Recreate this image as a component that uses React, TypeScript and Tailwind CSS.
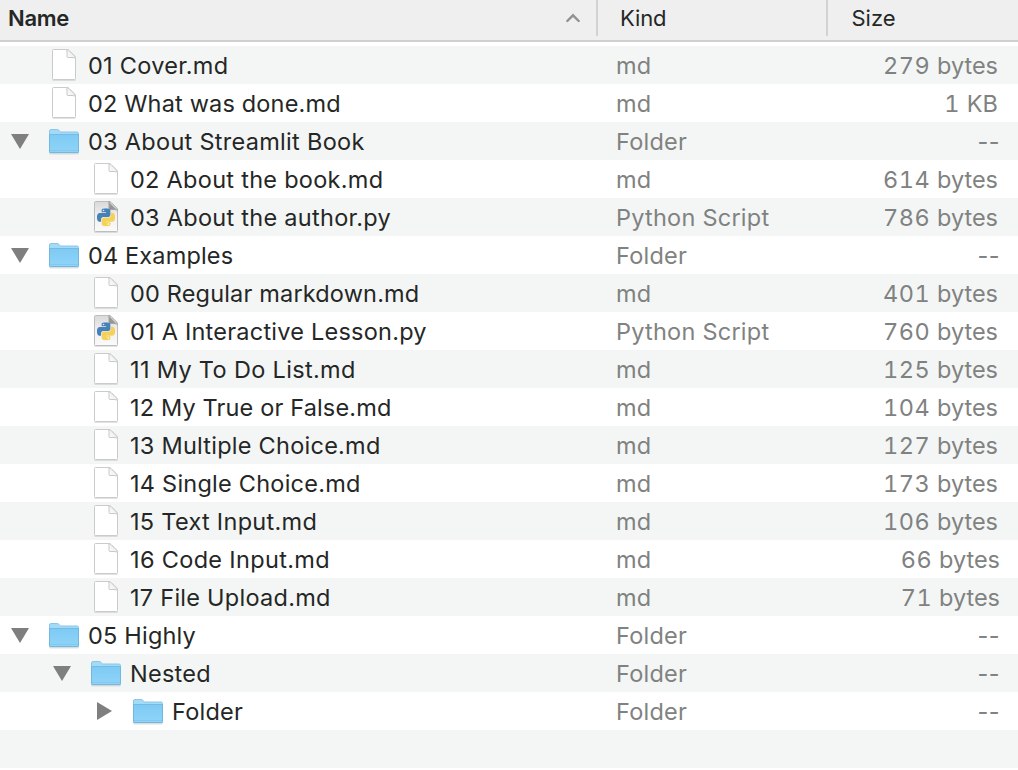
import React from "react";

type IconKind = "file" | "python" | "folder";

interface Row {
  name: string;
  icon: IconKind;
  kind: string;
  size: string;
  indent: string;
  open?: boolean;
  track: string;
}

const L0 = "pl-0";
const L1 = "pl-[42px]";
const L2 = "pl-[84px]";

const rows: Row[] = [
  { name: "01 Cover.md", icon: "file", kind: "md", size: "279 bytes", indent: L0, track: "tracking-[0.27px]" },
  { name: "02 What was done.md", icon: "file", kind: "md", size: "1 KB", indent: L0, track: "tracking-[0.17px]" },
  { name: "03 About Streamlit Book", icon: "folder", kind: "Folder", size: "--", indent: L0, open: true, track: "tracking-[0.29px]" },
  { name: "02 About the book.md", icon: "file", kind: "md", size: "614 bytes", indent: L1, track: "tracking-[0.28px]" },
  { name: "03 About the author.py", icon: "python", kind: "Python Script", size: "786 bytes", indent: L1, track: "tracking-[0.28px]" },
  { name: "04 Examples", icon: "folder", kind: "Folder", size: "--", indent: L0, open: true, track: "tracking-[0.15px]" },
  { name: "00 Regular markdown.md", icon: "file", kind: "md", size: "401 bytes", indent: L1, track: "tracking-[0.17px]" },
  { name: "01 A Interactive Lesson.py", icon: "python", kind: "Python Script", size: "760 bytes", indent: L1, track: "tracking-[0.23px]" },
  { name: "11 My To Do List.md", icon: "file", kind: "md", size: "125 bytes", indent: L1, track: "tracking-[0.33px]" },
  { name: "12 My True or False.md", icon: "file", kind: "md", size: "104 bytes", indent: L1, track: "tracking-[0.15px]" },
  { name: "13 Multiple Choice.md", icon: "file", kind: "md", size: "127 bytes", indent: L1, track: "tracking-[0.25px]" },
  { name: "14 Single Choice.md", icon: "file", kind: "md", size: "173 bytes", indent: L1, track: "tracking-[0.24px]" },
  { name: "15 Text Input.md", icon: "file", kind: "md", size: "106 bytes", indent: L1, track: "tracking-[0.29px]" },
  { name: "16 Code Input.md", icon: "file", kind: "md", size: "66 bytes", indent: L1, track: "tracking-[0.33px]" },
  { name: "17 File Upload.md", icon: "file", kind: "md", size: "71 bytes", indent: L1, track: "tracking-[0.26px]" },
  { name: "05 Highly", icon: "folder", kind: "Folder", size: "--", indent: L0, open: true, track: "tracking-[0.2px]" },
  { name: "Nested", icon: "folder", kind: "Folder", size: "--", indent: L1, open: true, track: "tracking-[0.25px]" },
  { name: "Folder", icon: "folder", kind: "Folder", size: "--", indent: L2, open: false, track: "tracking-[0.25px]" },
];

function Defs() {
  return (
    <svg width="0" height="0" className="absolute" aria-hidden="true">
      <defs>
        <linearGradient id="folderFront" x1="0" y1="0" x2="0" y2="1">
          <stop offset="0" stopColor="#7ecaf4" />
          <stop offset="1" stopColor="#90d4f9" />
        </linearGradient>
        <linearGradient id="pyPage" x1="0" y1="0" x2="0" y2="1">
          <stop offset="0" stopColor="#d9d9d9" />
          <stop offset="0.5" stopColor="#f1f1f1" />
          <stop offset="1" stopColor="#fafafa" />
        </linearGradient>
        <linearGradient id="foldShade" x1="0" y1="1" x2="1" y2="0">
          <stop offset="0" stopColor="#ffffff" />
          <stop offset="1" stopColor="#e4e4e4" />
        </linearGradient>
        <linearGradient id="pyFold" x1="0" y1="1" x2="1" y2="0">
          <stop offset="0" stopColor="#8a8a8a" />
          <stop offset="0.45" stopColor="#9a9a9a" />
          <stop offset="0.55" stopColor="#f2f2f2" />
          <stop offset="1" stopColor="#f8f8f8" />
        </linearGradient>
      </defs>
    </svg>
  );
}

function FolderIcon() {
  return (
    <svg width="40" height="38" viewBox="0 0 40 38" className="shrink-0">
      <path d="M5.5 31.8h29" stroke="#b5babd" strokeWidth="1" opacity=".7" />
      <path d="M5.5 30.5V9q0-1.5 1.5-1.5h6.3q1 0 1.6.8l.9 1q.5.7 1.4.7H33q1.500 0 1.500 1.500v19z" fill="#a3daf8" stroke="#8cc6e6" strokeWidth="1" />
      <path d="M5 12.500h30V30q0 1-1 1H6q-1 0-1-1z" fill="url(#folderFront)" />
      <path d="M5.500 12.500h29" stroke="#72bbe4" strokeWidth="1" />
      <path d="M5.500 12v17.500q0 1 1 1h27q1 0 1-1V12" fill="none" stroke="#72b8de" strokeWidth="1" />
      <path d="M6 28.500h28" stroke="#83c8ef" strokeWidth="1" />
    </svg>
  );
}

function PageIcon({ python }: { python?: boolean }) {
  return (
    <svg width="40" height="38" viewBox="0 0 40 38" className="shrink-0">
      <path d="M8.500 34h23" stroke="#a0a0a0" strokeWidth="1" opacity=".6" />
      <path
        d="M8.500 4.500q0-1 1-1H22.500q1.500 0 2.500 1l5.500 5.500q1 1 1 2.500v20q0 1-1 1h-21q-1 0-1-1z"
        fill={python ? "url(#pyPage)" : "#ffffff"}
        stroke={python ? "#bdbdbd" : "#cbcbcb"}
        strokeWidth="1"
      />
      <path
        d="M22.500 3.500q.5 1 .5 3v4q0 1 1 1h4q2.500 0 3.500 1q0-1.500-1-2.500L25 4.500q-1-1-2.500-1z"
        fill={python ? "url(#pyFold)" : "url(#foldShade)"}
        stroke={python ? "#a5a5a5" : "#c8c8c8"}
        strokeWidth="1"
      />
      {python && (
        <svg x="11" y="10.300" width="18" height="18" viewBox="0 0 24 24">
          <path
            fill="#4681b9"
            d="M14.25.18l.9.2.73.26.59.3.45.32.34.34.25.34.16.33.1.3.04.26.02.2-.01.13V8.500l-.05.63-.13.55-.21.46-.26.38-.3.31-.33.25-.35.19-.35.14-.33.1-.3.07-.26.04-.21.02H8.770l-.69.05-.59.14-.5.22-.41.27-.33.32-.27.35-.2.36-.15.37-.1.35-.07.32-.04.27-.02.21v3.060H3.170l-.21-.03-.28-.07-.32-.12-.35-.18-.36-.26-.36-.36-.35-.46-.32-.59-.28-.73-.21-.88-.14-1.050-.05-1.230.06-1.220.16-1.040.24-.87.32-.71.36-.57.4-.44.42-.33.42-.24.4-.16.36-.1.32-.05.24-.01h.16l.06.01h8.160v-.83H6.180l-.01-2.750-.02-.37.05-.34.11-.31.17-.28.25-.26.31-.23.38-.2.44-.18.51-.15.58-.12.64-.1.71-.06.77-.04.84-.02 1.270.05z"
          />
          <path
            fill="#f5d15a"
            d="M21.100 6.110l.28.06.32.12.35.18.36.27.36.35.35.47.32.59.28.73.21.88.14 1.040.05 1.230-.06 1.230-.16 1.040-.24.86-.32.71-.36.57-.4.45-.42.33-.42.24-.4.16-.36.09-.32.05-.24.02-.16-.01h-8.220v.82h5.840l.01 2.760.02.36-.05.34-.11.31-.17.29-.25.25-.31.24-.38.2-.44.17-.51.15-.58.13-.64.09-.71.07-.77.04-.84.01-1.270-.04-1.070-.14-.9-.2-.73-.25-.59-.3-.45-.33-.34-.34-.25-.34-.16-.33-.1-.3-.04-.25-.02-.2.01-.13v-5.340l.05-.64.13-.54.21-.46.26-.38.3-.32.33-.24.35-.2.35-.14.33-.1.3-.06.26-.04.21-.02.13-.01h5.840l.69-.05.59-.14.5-.21.41-.28.33-.32.27-.35.2-.36.15-.36.1-.35.07-.32.04-.28.02-.21V6.070h2.090l.14.01z"
          />
          <circle cx="8.700" cy="2.900" r="1.100" fill="#dfe9f2" />
          <circle cx="15.200" cy="21.100" r="1.100" fill="#fdf6dc" />
        </svg>
      )}
    </svg>
  );
}

function Disclosure({ open }: { open?: boolean }) {
  return (
    <svg width="44" height="38" viewBox="0 0 44 38" className="shrink-0">
      {open === true && <path d="M11 12h18l-9 15z" fill="#7f7f7f" />}
      {open === false && <path d="M13 10v18l15-9z" fill="#7f7f7f" />}
    </svg>
  );
}

function Size({ value }: { value: string }) {
  const [amount, unit] = value.split(" ");
  if (!unit) {
    return <div className="flex-1 pt-0.5 pr-[18px] text-right tracking-[0.4px] text-[#808281]">{value}</div>;
  }
  return (
    <div className={`flex-1 pt-0.5 text-right text-[#808281] ${amount.length === 2 ? "pr-[18px]" : "pr-5"}`}>
      <span className="tracking-[0.5px] tabular-nums">{amount} </span>
      <span>{unit}</span>
    </div>
  );
}

export default function App() {
  return (
    <div className="flex h-[770px] w-[1018px] flex-col overflow-hidden bg-white font-['Inter','Liberation_Sans',sans-serif] text-[23.500px] text-[#252726]">
      <Defs />
      <header className="flex h-[42px] shrink-0 border-b-2 border-[#cfcfcf] bg-[#efefef] text-[22px]">
        <div className="flex h-9 w-[596px] items-center justify-between pr-[15px] pl-2">
          <span className="font-semibold tracking-[-0.3px]">Name</span>
          <svg width="16" height="12" viewBox="0 0 16 12">
            <path d="M2.300 9l5.700-5.700L13.700 9" fill="none" stroke="#929292" strokeWidth="2.400" strokeLinecap="round" />
          </svg>
        </div>
        <div className="flex h-9 w-[230px] items-center border-l-2 border-[#d2d2d2] pl-[22px] tracking-[-0.15px]">Kind</div>
        <div className="flex h-9 flex-1 items-center border-l-2 border-[#d2d2d2] pl-[23.500px]">Size</div>
      </header>
      <main className="flex flex-col pt-1">
        {rows.map((row, i) => (
          <div key={i} className="flex h-[38px] items-center whitespace-nowrap odd:bg-[#f4f6f5]">
            <div className={`flex w-[616px] items-center ${row.indent}`}>
              <Disclosure open={row.open} />
              {row.icon === "folder" ? <FolderIcon /> : <PageIcon python={row.icon === "python"} />}
              <span className={`pt-0.5 pl-1 ${row.track}`}>{row.name}</span>
            </div>
            <div className="w-[200px] pt-0.5 tracking-[0.24px] text-[#808281]">{row.kind}</div>
            <Size value={row.size} />
          </div>
        ))}
        <div className="h-[38px] bg-[#f4f6f5]" />
      </main>
    </div>
  );
}
